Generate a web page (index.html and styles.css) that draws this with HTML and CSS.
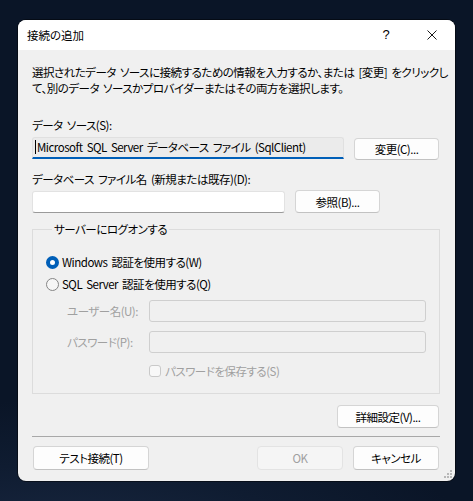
FILE: index.html
```html
<!DOCTYPE html>
<html lang="ja">
<head>
<meta charset="utf-8">
<title>接続の追加</title>
<link rel="stylesheet" href="styles.css">
</head>
<body>
<div class="dialog">
  <div class="titlebar">
    <span class="title">接続の追加</span>
    <div class="tb-buttons">
      <span class="tb-btn help">?</span>
      <span class="tb-btn close"><svg width="10" height="10" viewBox="0 0 10 10"><path d="M0.5 0.5L9.5 9.5M9.5 0.5L0.5 9.5" stroke="#1a1a1a" stroke-width="1"/></svg></span>
    </div>
  </div>
  <div class="content">
    <p class="desc">選択されたデータ ソースに接続するための情報を入力するか、または [変更] をクリックし<br>て、別のデータ ソースかプロバイダーまたはその両方を選択します。</p>

    <div class="label l1">データ ソース(S):</div>
    <div class="row r1">
      <div class="textbox ds"><span class="caret"></span>Microsoft SQL Server データベース ファイル (SqlClient)</div>
      <div class="btn b1">変更(C)...</div>
    </div>

    <div class="label l2">データベース ファイル名 (新規または既存)(D):</div>
    <div class="row r2">
      <div class="textbox file"></div>
      <div class="btn b2">参照(B)...</div>
    </div>

    <fieldset class="group">
      <legend>サーバーにログオンする</legend>
      <div class="radio-row checked"><span class="radio"></span><span>Windows 認証を使用する(W)</span></div>
      <div class="radio-row"><span class="radio"></span><span>SQL Server 認証を使用する(Q)</span></div>
      <div class="field-row f1"><span class="flabel">ユーザー名(U):</span><div class="textbox disabled"></div></div>
      <div class="field-row f2"><span class="flabel">パスワード(P):</span><div class="textbox disabled"></div></div>
      <div class="check-row"><span class="checkbox"></span><span>パスワードを保存する(S)</span></div>
    </fieldset>

    <div class="adv-row"><div class="btn adv">詳細設定(V)...</div></div>
    <div class="separator"></div>
    <div class="bottom-row">
      <div class="btn test">テスト接続(T)</div>
      <div class="spacer"></div>
      <div class="btn ok disabled">OK</div>
      <div class="btn cancel">キャンセル</div>
    </div>
  </div>
  <svg class="grip" width="8" height="8" viewBox="0 0 8 8">
    <rect x="6" y="0" width="2" height="2" fill="#b8b8b8"/>
    <rect x="3" y="3" width="2" height="2" fill="#b8b8b8"/>
    <rect x="6" y="3" width="2" height="2" fill="#b8b8b8"/>
    <rect x="0" y="6" width="2" height="2" fill="#b8b8b8"/>
    <rect x="3" y="6" width="2" height="2" fill="#b8b8b8"/>
    <rect x="6" y="6" width="2" height="2" fill="#b8b8b8"/>
  </svg>
</div>
</body>
</html>
```

FILE: styles.css
```css
* { box-sizing: border-box; }
html, body { margin: 0; padding: 0; }
body {
  width: 473px;
  height: 501px;
  overflow: hidden;
  padding: 20px 0 0 18px;
  background: radial-gradient(ellipse 420px 160px at 60px 560px, #1b2a44 0%, #0f1c31 60%, #0a1527 100%), #0a1527;
  background-color: #0a1527;
  font-family: "Noto Sans CJK JP", "Noto Sans", sans-serif;
  font-size: 11.5px;
  letter-spacing: -0.5px;
  word-spacing: 2px;
  font-feature-settings: "palt";
  color: #000;
}
.dialog {
  position: relative;
  width: 437px;
  height: 461px;
  background: #f0f0f0;
  border-radius: 8px;
  overflow: hidden;
  display: flex;
  flex-direction: column;
  box-shadow: 0 0 0 1px rgba(0, 0, 0, 0.45);
}
.titlebar {
  height: 30px;
  background: #ffffff;
  display: flex;
  align-items: center;
  justify-content: space-between;
  flex: none;
}
.title { padding-left: 9px; line-height: 16px; letter-spacing: 0; }
.tb-buttons { display: flex; height: 100%; }
.tb-btn {
  width: 46px;
  display: flex;
  align-items: center;
  justify-content: center;
  line-height: 16px;
}
.help { font-family: "Liberation Sans", sans-serif; font-size: 13px; letter-spacing: 0; }
.content {
  flex: 1;
  display: flex;
  flex-direction: column;
  padding: 14px 15px 0 14px;
}
.desc { margin: 0; line-height: 16px; white-space: nowrap; }
.label { line-height: 16px; }
.l1 { margin-top: 21px; }
.l2 { margin-top: 11px; }
.row { display: flex; gap: 10px; align-items: flex-start; }
.r1 { margin-top: 4px; }
.r2 { margin-top: 3px; }

.textbox {
  height: 22px;
  background: #ffffff;
  border: 1px solid #e2e2e2;
  border-bottom-color: #9a9a9a;
  border-radius: 3px;
  display: flex;
  align-items: center;
  padding-left: 2px;
  line-height: 16px;
  white-space: nowrap;
}
.ds {
  width: 312px;
  background: #ebebeb;
  border-color: #e0e0e0;
  border-bottom: 2px solid #005fb8;
  border-radius: 3px 3px 0 0;
  padding-bottom: 1px;
}
.caret { width: 1px; height: 14px; background: #000; margin-right: 1px; }
.file { width: 253px; margin-top: 1px; }
.textbox.disabled {
  background: #f0f0f0;
  border-color: #cfcfcf;
  width: 277px;
}

.btn {
  height: 22px;
  background: #fdfdfd;
  border: 1px solid #d5d5d5;
  border-bottom-color: #c2c2c2;
  border-radius: 4px;
  display: flex;
  align-items: center;
  justify-content: center;
  line-height: 16px;
  white-space: nowrap;
  flex: none;
}
.b1 { width: 85px; margin-top: 1px; }
.b2 { width: 85px; height: 23px; }

.group {
  margin: 8px 0 0 0;
  padding: 17px 13px 14px 13px;
  border: 1px solid #dcdcdc;
  min-width: 0;
  width: 408px;
}
.group legend {
  margin-left: 6px;
  padding: 0 2px;
  line-height: 16px;
}
.radio-row {
  display: flex;
  align-items: center;
  height: 16px;
  line-height: 16px;
  gap: 3px;
}
.radio-row + .radio-row { margin-top: 6px; }
.radio {
  width: 13px;
  height: 13px;
  border-radius: 50%;
  border: 1px solid #858585;
  background: #f6f6f6;
  flex: none;
}
.checked .radio {
  border: 4px solid #005fb8;
  background: #ffffff;
}
.field-row {
  display: flex;
  align-items: center;
  color: #a0a0a0;
}
.f1 { margin-top: 8px; }
.f2 { margin-top: 9px; }
.flabel { width: 103px; padding-left: 21px; line-height: 16px; }
.check-row {
  display: flex;
  align-items: center;
  gap: 4px;
  margin-top: 10px;
  margin-left: 103px;
  color: #a0a0a0;
  line-height: 16px;
}
.checkbox {
  width: 12px;
  height: 12px;
  border: 1px solid #c9c9c9;
  border-radius: 3px;
  background: #f8f8f8;
  flex: none;
}

.adv-row { display: flex; justify-content: flex-end; margin-top: 11px; }
.adv { width: 102px; height: 23px; margin-right: 1px; }
.separator { height: 1px; background: #a8a8a8; margin-top: 8px; width: 408px; }
.bottom-row { display: flex; gap: 10px; margin-top: 9px; align-items: flex-start; }
.spacer { flex: 1; }
.test { width: 116px; height: 24px; margin-left: 1px; }
.ok, .cancel { width: 86px; height: 24px; }
.cancel { margin-right: 1px; }
.btn.disabled {
  background: #f5f5f5;
  border-color: #e3e3e3;
  color: #a0a0a0;
}
.grip { position: absolute; right: 3px; bottom: 3px; }
```
